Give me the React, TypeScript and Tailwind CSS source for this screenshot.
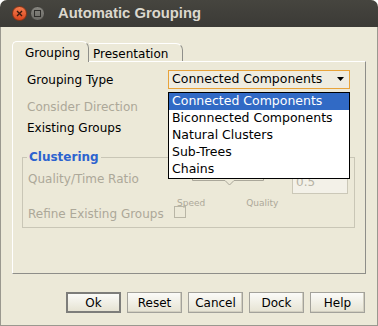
import React from "react";

const font = { fontFamily: '"DejaVu Sans", sans-serif' };

function Btn({ label, def }: { label: string; def?: boolean }) {
  return (
    <div
      className={
        "w-[55px] h-[21px] flex items-center justify-center text-[12px] text-black bg-gradient-to-b from-[#fbfbf8] to-[#e6e3d3] " +
        (def
          ? "border-2 border-[#7d7d7a]"
          : "border border-[#a3a29b] shadow-[inset_-1px_-1px_0_#d2cfc0]")
      }
    >
      {label}
    </div>
  );
}

export default function App() {
  const items = [
    "Connected Components",
    "Biconnected Components",
    "Natural Clusters",
    "Sub-Trees",
    "Chains",
  ];
  return (
    <div
      className="relative w-[378px] h-[326px] overflow-hidden rounded-t-[7px] bg-[#ece9d8] flex flex-col"
      style={font}
    >
      {/* Title bar */}
      <div className="h-[27px] shrink-0 bg-gradient-to-b from-[#46453f] to-[#3b3a36] flex items-center">
        <div className="ml-[12px] w-[15px] h-[15px] rounded-full bg-gradient-to-b from-[#f47c4d] to-[#d9441d] border border-[#8a3416] flex items-center justify-center">
          <svg width="7" height="7" viewBox="0 0 7 7">
            <path d="M1 1 L6 6 M6 1 L1 6" stroke="#3a1a0e" strokeWidth="1.4" />
          </svg>
        </div>
        <div className="ml-[3px] w-[15px] h-[15px] rounded-full bg-gradient-to-b from-[#86857f] to-[#6c6b66] border border-[#3e3d39] flex items-center justify-center">
          <div className="w-[7px] h-[7px] border border-[#2e2d2a]" />
        </div>
        <div
          className="ml-[13px] text-[14.8px] font-bold text-[#dcd8ce] leading-none"
          style={{ fontFamily: '"Liberation Sans", sans-serif' }}
        >
          Automatic Grouping
        </div>
      </div>

      {/* Body */}
      <div className="flex-1 flex flex-col border-x border-b border-[#9a988f] px-[11px] pt-[14px]">
        {/* Tabs */}
        <div className="h-[20px] flex items-end">
          <div className="relative z-10 h-[21px] w-[77px] -mb-[1px] pl-[12px] pt-[2px] text-[12px] text-black bg-[#ece9d8] border-l border-t border-white border-r border-r-[#8f8f8a] rounded-tl-[5px] rounded-tr-[7px]">
            Grouping
          </div>
          <div className="h-[18px] w-[94px] pl-[4px] pt-[1px] text-[12px] text-black border-t border-white border-r border-r-[#8f8f8a] rounded-tr-[7px]">
            Presentation
          </div>
        </div>

        {/* Panel */}
        <div className="h-[213px] w-[354px] border-l border-t border-white border-r border-b border-r-[#8e8e89] border-b-[#8e8e89] pl-[14px] pt-[8px]">
          {/* row 1 */}
          <div className="flex h-[19px] items-center">
            <div className="w-[141px] text-[12px] text-black">Grouping Type</div>
            <div className="w-[182px] h-[19px] border border-[#e8a33a] bg-[#efece0] flex items-center pl-[3px] text-[12.5px] text-black">
              <span className="flex-1">Connected Components</span>
              <svg width="8" height="5" viewBox="0 0 8 5" className="mr-[4px]">
                <path d="M0 0 H7 L3.5 4 Z" fill="#000" />
              </svg>
            </div>
          </div>
          <div className="mt-[9px] h-[18px] flex items-center text-[12px] text-[#aca899]">
            Consider Direction
          </div>
          <div className="mt-[3px] h-[18px] flex items-center text-[12px] text-black">
            Existing Groups
          </div>

          {/* Clustering group */}
          <div className="relative mt-[20px] -ml-[5px] w-[333px] h-[71px] border border-[#c9c6b6]">
            <div className="absolute -top-[9px] left-[4px] px-[2px] bg-[#ece9d8] text-[12px] font-bold text-[#2c63cf] leading-[16px]">
              Clustering
            </div>
            <div className="grid grid-cols-[147px_114px_56px] grid-rows-[30px_20px_14px] pl-[5px]">
              <div className="col-start-1 row-start-1 pt-[13px] text-[12px] text-[#aca899] leading-[16px] whitespace-nowrap">
                Quality/Time Ratio
              </div>
              <div className="col-start-2 row-start-1">
                <svg width="114" height="30" viewBox="0 0 114 30">
                  <path
                    d="M17.5 4 V22.5 H50 L54.5 27 L59 22.5 H88.5 V4"
                    fill="none"
                    stroke="#aaa79a"
                  />
                </svg>
              </div>
              <div className="col-start-3 row-start-1 row-span-2 pl-[3px] pt-[12px]">
                <div className="w-[56px] h-[24px] border border-[#cbc8b8] bg-[#f3f1e8] pl-[3px] flex items-center text-[12px] text-[#b7b3a5]">
                  0.5
                </div>
              </div>
              <div className="col-start-2 row-start-2 flex items-end text-[9px] text-[#aca899] leading-[10px] pl-[2px]">
                <span>Speed</span>
                <span className="ml-[41px]">Quality</span>
              </div>
              <div className="col-start-1 row-start-3 -mt-[2px] text-[12px] text-[#aca899] leading-[16px] whitespace-nowrap">
                Refine Existing Groups
              </div>
              <div className="col-start-2 row-start-3 -mt-[2px] -ml-[1px]">
                <div className="w-[12px] h-[12px] border border-[#b9b6a6]" />
              </div>
            </div>
          </div>
        </div>

        {/* Buttons */}
        <div className="mt-[18px] flex justify-end gap-[6px] pr-[1px]">
          <Btn label="Ok" def />
          <Btn label="Reset" />
          <Btn label="Cancel" />
          <Btn label="Dock" />
          <Btn label="Help" />
        </div>
      </div>

      {/* Dropdown list overlay */}
      <div className="absolute left-[168px] top-[92px] w-[182px] h-[87px] border border-black bg-white text-[12.5px] text-black">
        {items.map((it, i) => (
          <div
            key={it}
            className={
              "h-[17px] pl-[3px] flex items-center " +
              (i === 0 ? "bg-[#316ac5] text-white" : "")
            }
          >
            {it}
          </div>
        ))}
      </div>
    </div>
  );
}
